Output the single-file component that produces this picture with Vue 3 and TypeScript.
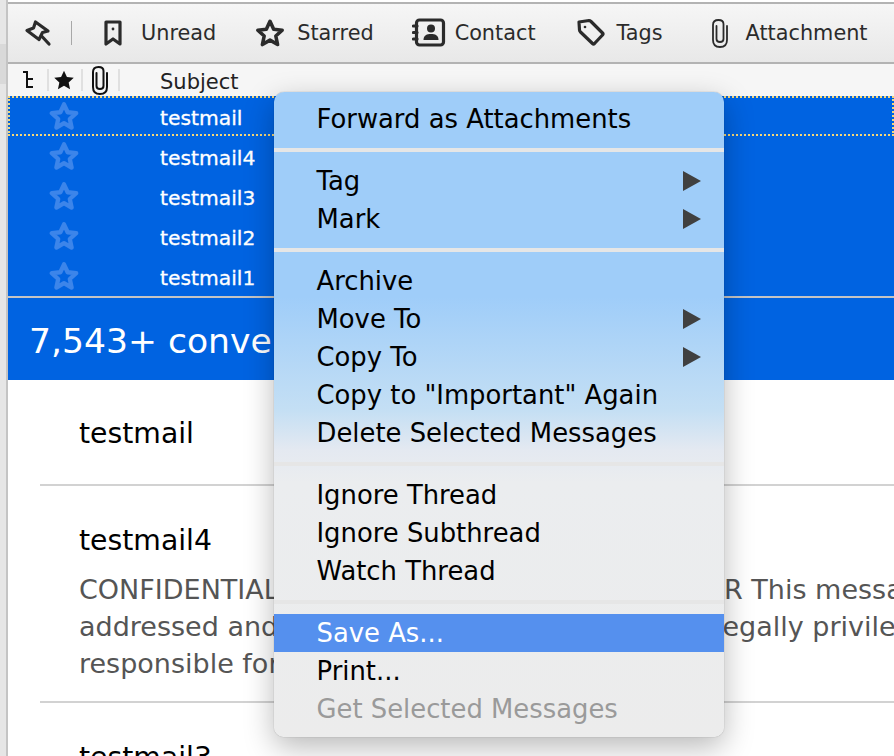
<template>
  <div class="window">
    <div class="edge" />
    <div class="main">
      <div class="toolbar">
        <svg class="tb-icon pin" viewBox="9 7 32 32" aria-hidden="true">
          <path d="M20.5 12 L33 21 L27.5 22.5 L24 29.5 L12 20.5 L18.5 18 Z" />
          <path d="M27 26.5 L34 34" />
        </svg>
        <span class="tb-sep" />
        <button type="button" class="tb-btn unread">
          <svg class="tb-icon" viewBox="0 0 24 32" aria-hidden="true">
            <path d="M5 5 H19 V27 L12 22 L5 27 Z" />
            <circle cx="12" cy="12" r="1.4" class="dot" />
          </svg>
          <span>Unread</span>
        </button>
        <button type="button" class="tb-btn starred">
          <svg class="tb-icon star" viewBox="0 0 32 32" aria-hidden="true">
            <path :d="starPath" />
          </svg>
          <span>Starred</span>
        </button>
        <button type="button" class="tb-btn contact">
          <svg class="tb-icon" viewBox="0 0 34 32" aria-hidden="true">
            <rect x="4.5" y="3" width="27" height="25" rx="3" />
            <path d="M1.5 9 H5 M1.5 15.5 H5 M1.5 22 H5" />
            <circle cx="19" cy="11.5" r="4" class="solid" />
            <path d="M11.5 23 C11.5 18 15 17 19 17 C23 17 26.5 18 26.5 23 Z" class="solid" />
          </svg>
          <span>Contact</span>
        </button>
        <button type="button" class="tb-btn tags">
          <svg class="tb-icon" viewBox="0 0 32 32" aria-hidden="true">
            <path d="M3 5 L13 3.5 Q14 3.5 15 4.5 L26.5 16 Q27.5 17 26.5 18 L18.5 26.5 Q17.5 27.5 16.5 26.5 L4.5 15 Q3.5 14 3.5 13 Z" />
            <circle cx="9" cy="10" r="1.3" class="dot" />
          </svg>
          <span>Tags</span>
        </button>
        <button type="button" class="tb-btn attach">
          <svg class="tb-icon thin" viewBox="0 0 20 32" aria-hidden="true">
            <path :d="clipPath" />
          </svg>
          <span>Attachment</span>
        </button>
      </div>

      <div class="col-head">
        <svg class="thread" viewBox="0 0 12 18" aria-hidden="true"><path d="M1 1 H5 V8 H11 M5 8 V16 H11" /></svg>
        <span class="col-sep" />
        <svg class="head-star" viewBox="0 0 32 32" aria-hidden="true"><path :d="starPath" /></svg>
        <span class="col-sep" />
        <svg class="head-clip" viewBox="0 0 20 32" aria-hidden="true">
          <path :d="clipPath" />
        </svg>
        <span class="col-sep" />
        <span class="col-subject">Subject</span>
      </div>

      <div class="rows">
        <div v-for="(row, i) in rows" :key="row" class="row" :class="{ focused: i === 0 }">
          <svg class="row-star" viewBox="0 0 32 32" aria-hidden="true"><path :d="starPath" /></svg>
          <span class="row-subject">{{ row }}</span>
        </div>
      </div>

      <div class="banner">7,543+ conversations selected</div>

      <div class="summary">
        <div class="mail">
          <div class="mail-title">testmail</div>
        </div>
        <div class="mail">
          <div class="mail-title">testmail4</div>
          <div class="mail-line">
            CONFIDENTIALITY <span class="stretch">NOTICE AND DISCLAIMER</span> This message is intended
          </div>
          <div class="mail-line">
            addressed and may contain <span class="squeeze">information that is</span> legally privileged
          </div>
          <div class="mail-line">responsible for delivering the message to the</div>
        </div>
        <div class="mail">
          <div class="mail-title">testmail3</div>
        </div>
      </div>
    </div>

    <div class="menu" role="menu">
      <template v-for="(group, g) in menu" :key="g">
        <div v-if="g > 0" class="menu-sep" :class="{ 'menu-sep-light': g === 1 || g === 2 }" />
        <div
          v-for="item in group"
          :key="item.label"
          class="menu-item"
          :class="{ active: item.active, disabled: item.disabled }"
          role="menuitem"
        >
          <span>{{ item.label }}</span>
          <span v-if="item.sub" class="arrow" />
        </div>
      </template>
    </div>
  </div>
</template>

<script setup lang="ts">
interface MenuItem {
  label: string
  sub?: boolean
  active?: boolean
  disabled?: boolean
}

// same outlines are reused by toolbar, column head and rows
const starPath =
  'M16 3.5 L19.9 12 L29 13 L22.2 19.2 L24.1 28.3 L16 23.6 L7.9 28.3 L9.8 19.2 L3 13 L12.1 12 Z'
const clipPath =
  'M6.5 9 V22 Q6.5 25 10 25 Q13.5 25 13.5 22 V7 Q13.5 3 8.5 3 Q3 3 3 8 V23 Q3 30 10 30 Q17 30 17 23 V9'

const rows = ['testmail', 'testmail4', 'testmail3', 'testmail2', 'testmail1']

const menu: MenuItem[][] = [
  [{ label: 'Forward as Attachments' }],
  [{ label: 'Tag', sub: true }, { label: 'Mark', sub: true }],
  [
    { label: 'Archive' },
    { label: 'Move To', sub: true },
    { label: 'Copy To', sub: true },
    { label: 'Copy to "Important" Again' },
    { label: 'Delete Selected Messages' },
  ],
  [{ label: 'Ignore Thread' }, { label: 'Ignore Subthread' }, { label: 'Watch Thread' }],
  [{ label: 'Save As...', active: true }, { label: 'Print...' }, { label: 'Get Selected Messages', disabled: true }],
]
</script>

<style scoped>
.window {
  position: relative;
  display: flex;
  width: 894px;
  height: 756px;
  overflow: hidden;
  background: #fff;
  font-family: "DejaVu Sans", "Open Sans", sans-serif;
  color: #000;
}
.edge {
  width: 6px; flex-shrink: 0; border-right: 2px solid #c4c4c4;
  background: linear-gradient(#e6e6e6 44px, #d9d9d9 44px, #d9d9d9 84px, #e6e6e6 84px);
}
.main { flex: 1; min-width: 0; display: flex; flex-direction: column; padding-top: 2px; }

.toolbar {
  height: 58px;
  flex-shrink: 0;
  display: flex;
  align-items: center;
  border-top: 2px solid #b3b3b3;
  border-bottom: 2px solid #b3b3b3;
  background: linear-gradient(#f6f6f6, #e8e8e8);
  color: #2b2b2b;
}
.tb-icon { display: block; height: 32px; width: 32px; flex-shrink: 0; fill: none; stroke: #2b2b2b; stroke-width: 3.2; stroke-linejoin: round; stroke-linecap: round; }
.tb-icon .solid { fill: #2b2b2b; stroke: none; }
.tb-icon .dot { fill: #2b2b2b; stroke: none; }
.tb-icon.thin { stroke-width: 1.8; width: 20px; }
.tb-icon.star { width: 30px; height: 30px; stroke-width: 3.8; }
.pin { margin-left: 16px; }
.tb-sep { width: 1px; height: 24px; background: #a8a8a8; margin-left: 15px; }
.tb-btn {
  border: 0; background: none; padding: 0; color: inherit; font: inherit;
  font-size: 20.8px; display: flex; align-items: center; white-space: nowrap;
}
.unread { margin-left: 29px; gap: 16px; }
.unread .tb-icon { width: 24px; }
.starred { margin-left: 39px; gap: 12px; }
.contact { margin-left: 38px; gap: 9px; }
.contact .tb-icon { width: 34px; }
.tags { margin-left: 40px; gap: 9px; }
.attach { margin-left: 47px; gap: 16px; }

.col-head {
  height: 32px; flex-shrink: 0; display: flex; align-items: center;
  background: #f6f6f6; font-size: 21px; color: #222;
}
.thread { width: 12px; height: 18px; margin-left: 14px; fill: none; stroke: #111; stroke-width: 2; }
.col-sep { width: 2px; height: 22px; background: #e0e0e0; margin-left: 13px; }
.head-star { width: 24px; height: 24px; margin-left: 3px; fill: #111; }
.head-star + .col-sep { margin-left: 5px; }
.head-clip { width: 20px; height: 32px; margin-left: 7px; fill: none; stroke: #111; stroke-width: 2; stroke-linecap: round; }
.head-clip + .col-sep { margin-left: 8px; }
.col-subject { margin-left: 40px; padding-top: 4px; }

.rows { flex-shrink: 0; border-bottom: 2px solid #c4c4c4; }
.row {
  height: 40px; display: flex; align-items: center; background: #0063e1;
  color: #fff; font-size: 20.3px; position: relative;
}
.row.focused::after {
  content: ""; position: absolute; inset: 0; border: 2px dotted #f5d778;
}
.row-star { width: 30px; height: 30px; margin-left: 41px; fill: none; stroke: #3c85ea; stroke-width: 4.6; stroke-linejoin: round; }
.row-subject { margin-left: 81px; padding-top: 4px; -webkit-text-stroke: .3px #fff; }

.banner {
  height: 82px; flex-shrink: 0; display: flex; align-items: center;
  padding: 4px 0 0 21px; box-sizing: border-box;
  background: #0063e1; color: #fff; font-size: 34.6px; white-space: nowrap;
}

.summary { padding-left: 32px; overflow: hidden; }
.mail { border-bottom: 2px solid #d2d2d2; padding: 36px 0 19px 39px; white-space: nowrap; }
.mail:first-child { padding-top: 35px; padding-bottom: 31px; }
.mail:last-child { border-bottom: 0; padding-top: 36px; }
.mail-title { font-size: 28.3px; line-height: 38px; margin-bottom: 11px; }
.mail:first-child .mail-title { margin-bottom: 0; }
.mail-line { font-size: 27px; line-height: 37px; color: #555; }
.stretch { word-spacing: 35px; }
.squeeze { word-spacing: -3px; }

.menu {
  position: absolute; left: 274px; top: 92px; width: 450px; box-sizing: border-box;
  padding: 8px 0 9px; border-radius: 10px;
  background: linear-gradient(#9fcdf9 0, #9fcdf9 205px, #c4dff4 318px, #e4e9f1 358px, #ebedef 390px, #ececec 100%);
  box-shadow: 0 0 1px rgba(0,0,0,.45), 0 10px 30px rgba(0,0,0,.28);
  font-size: 25.85px;
}
.menu-item {
  height: 38px; display: flex; align-items: center; justify-content: space-between;
  padding: 0 23px 0 42.5px; white-space: nowrap; color: #000;
}
.menu-item.active { background: #5590ee; color: #fff; }
.menu-item.disabled { color: #9a9a9a; }
.menu-sep { height: 24px; position: relative; }
.menu-sep::after {
  content: ""; position: absolute; left: 0; right: 0; top: 10px; height: 4px; background: #e6e6e6;
}
.menu-sep-light::after { background: #e6e6e6; }
.arrow {
  width: 0; height: 0; border-left: 18px solid #404040;
  border-top: 10px solid transparent; border-bottom: 10px solid transparent;
}
</style>

<style>
html, body { margin: 0; background: #fff; }
</style>
